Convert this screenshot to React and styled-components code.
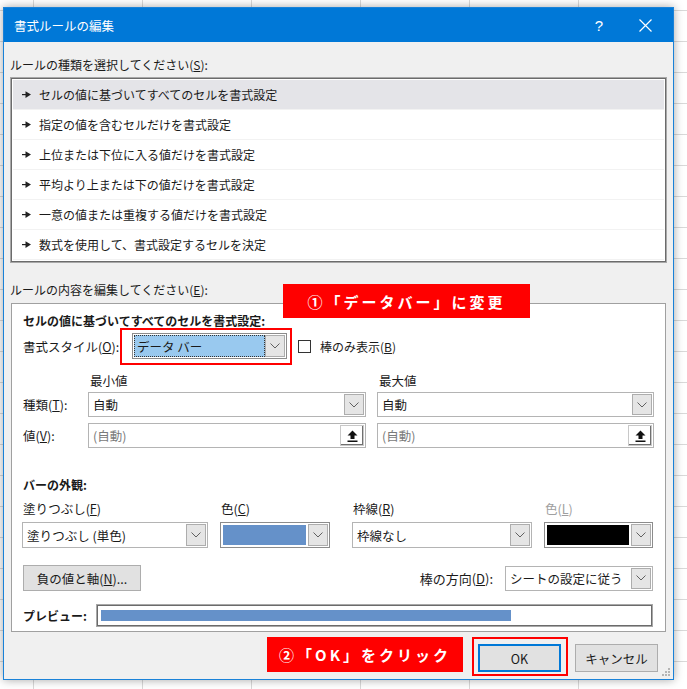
import React from "react";
import styled, { createGlobalStyle } from "styled-components";

const GlobalStyle = createGlobalStyle`
  html, body {
    margin: 0;
    padding: 0;
  }
  body {
    width: 687px;
    height: 689px;
    overflow: hidden;
    background-color: #fff;
    background-image:
      linear-gradient(to right, #d9d9d9 1px, transparent 1px),
      linear-gradient(to bottom, #d9d9d9 1px, transparent 1px);
    background-size: 109px 100%, 100% 31px;
    background-position: 33px 0, 0 10px;
    font-family: "Noto Sans CJK JP", "Noto Sans", sans-serif;
    color: #1a1a1a;
  }
`;

const Page = styled.div`
  padding: 7px 0 0 3px;
`;

const Dialog = styled.div`
  position: relative;
  box-sizing: border-box;
  width: 671px;
  height: 673px;
  border: 1px solid #1a82d8;
  background: #f0f0f0;
  box-shadow: 0 0 9px rgba(0, 0, 0, 0.35);
  display: flex;
  flex-direction: column;
`;

const TitleBar = styled.div`
  height: 34px;
  background: #0078d7;
  color: #fff;
  display: flex;
  align-items: center;
  padding: 0 5px 0 10px;
  font-size: 12.5px;
`;

const TitleText = styled.div`
  flex: 1;
`;

const TitleButton = styled.div`
  width: 46px;
  height: 34px;
  display: flex;
  align-items: center;
  justify-content: center;
  font-size: 15px;
  font-family: "Liberation Sans", sans-serif;
`;

const Body = styled.div`
  position: relative;
  flex: 1;
  display: flex;
  flex-direction: column;
  padding: 15px 6px 3px 6px;
  font-size: 12px;
`;

const SectionLabel = styled.div`
  height: 16px;
  line-height: 16px;
  margin: ${(p) => p.$m || "0"};
`;

const RuleList = styled.div`
  box-sizing: border-box;
  height: 186px;
  background: #fff;
  border: 1px solid #a8a8a8;
  box-shadow: inset 1px 1px 0 #6b6b6b, inset -1px -1px 0 #6b6b6b;
  padding: 2px;
  display: flex;
  flex-direction: column;
`;

const RuleRow = styled.div`
  height: 30px;
  flex: none;
  display: flex;
  align-items: center;
  padding-left: 9px;
  gap: 8px;
  background: ${(p) => (p.$active ? "#e4e4e8" : "#fff")};
  border-bottom: 1px solid #f2f2f2;
  box-sizing: border-box;
`;

const Panel = styled.div`
  box-sizing: border-box;
  height: 329px;
  margin: 0 1px;
  background: #fff;
  border: 1px solid #a0a0a0;
  padding: 9px 12px 3px 11px;
  display: flex;
  flex-direction: column;
`;

const Heading = styled.div`
  font-weight: 700;
  height: 15px;
  line-height: 15px;
  margin-top: ${(p) => p.$mt || 0}px;
`;

const Row = styled.div`
  display: flex;
  align-items: center;
  margin-top: ${(p) => p.$mt || 0}px;
  height: ${(p) => p.$h}px;
`;

const StyleLabel = styled.div`
  width: 97px;
  font-size: 12.5px;
`;

const Highlight = styled.div`
  box-sizing: border-box;
  height: 37px;
  width: 172px;
  border: 2px solid #ff0000;
  padding: 3px 3px 4px 10px;
  display: flex;
`;

const CheckBox = styled.div`
  box-sizing: border-box;
  width: 13px;
  height: 13px;
  border: 1px solid #333;
  background: #fff;
  margin: 0 9px 0 6px;
`;

const FieldGrid = styled.div`
  display: grid;
  grid-template-columns: 54px 278px 277px;
  column-gap: 11px;
  align-items: center;
  margin-top: ${(p) => p.$mt || 0}px;
  height: ${(p) => p.$h}px;
  font-size: 12.5px;
`;

const ColHead = styled.div`
  padding-left: 2px;
`;

const SelectBox = styled.div`
  box-sizing: border-box;
  width: ${(p) => (p.$w ? `${p.$w}px` : "100%")};
  height: ${(p) => p.$h || 25}px;
  border: 1px solid ${(p) => (p.$dark ? "#8c8c8c" : "#b4b4b4")};
  background: #fff;
  padding: 1px;
  display: flex;
`;

const SelectValue = styled.div`
  flex: 1;
  display: flex;
  align-items: center;
  padding-left: 3px;
  font-size: 12.5px;
  color: ${(p) => (p.$muted ? "#7a7a7a" : "#1a1a1a")};
  background: ${(p) => (p.$focus ? "#99c9ef" : "transparent")};
  outline: ${(p) => (p.$focus ? "1px dotted #333" : "none")};
  outline-offset: -1px;
`;

const Swatch = styled.div`
  flex: 1;
  margin: 1px 2px 1px 1px;
  background: ${(p) => p.$color};
`;

const DropButton = styled.div`
  box-sizing: border-box;
  width: 20px;
  border: 1px solid #adadad;
  background: #e5e5e5;
  display: flex;
  align-items: center;
  justify-content: center;
`;

const SpinButton = styled.div`
  box-sizing: border-box;
  width: 24px;
  background: #fff;
  border: 1px solid #c8c8c8;
  box-shadow: inset -1px -1px 0 #707070;
  display: flex;
  align-items: center;
  justify-content: center;
`;

const AppearanceRow = styled.div`
  display: flex;
  margin-left: -1px;
  margin-top: ${(p) => p.$mt || 0}px;
`;

const AppearanceCol = styled.div`
  display: flex;
  flex-direction: column;
  width: ${(p) => p.$w}px;
  margin-left: ${(p) => p.$ml || 0}px;
`;

const SmallLabel = styled.div`
  height: 16px;
  line-height: 16px;
  padding-left: 1px;
  margin-bottom: 5px;
  font-size: 12.5px;
  color: ${(p) => (p.$disabled ? "#a0a0a0" : "#1a1a1a")};
`;

const PushButton = styled.button`
  box-sizing: border-box;
  width: ${(p) => p.$w}px;
  height: ${(p) => p.$h || 26}px;
  background: #e1e1e1;
  border: 1px solid ${(p) => (p.$primary ? "#0078d7" : "#adadad")};
  box-shadow: ${(p) => (p.$primary ? "inset 0 0 0 1px #0078d7" : "none")};
  font-family: inherit;
  font-size: 12.5px;
  color: #1a1a1a;
  padding: 0;
  margin-top: ${(p) => p.$mt || 0}px;
  margin-left: ${(p) => p.$ml || 0}px;
`;

const RightGroup = styled.div`
  margin-left: auto;
  display: flex;
  align-items: center;
  gap: 12px;
  font-size: 13px;
`;

const PreviewBox = styled.div`
  box-sizing: border-box;
  width: 557px;
  height: 23px;
  margin-left: auto;
  background: #fff;
  border: 1px solid #a8a8a8;
  box-shadow: inset 1px 1px 0 #6b6b6b, inset -1px -1px 0 #6b6b6b;
  padding: 5px 4px;
`;

const PreviewBar = styled.div`
  height: 11px;
  background: #6591c9;
`;

const Footer = styled.div`
  display: flex;
  align-items: flex-start;
  margin-top: 5px;
  height: 39px;
  padding-left: 257px;
`;

const Note = styled.div`
  position: ${(p) => (p.$float ? "absolute" : "static")};
  left: ${(p) => (p.$float ? "279px" : "auto")};
  top: ${(p) => (p.$float ? "242px" : "auto")};
  box-sizing: border-box;
  width: ${(p) => p.$w}px;
  height: ${(p) => p.$h}px;
  background: #ff0000;
  color: #fff;
  font-weight: 700;
  font-size: 15px;
  letter-spacing: 3px;
  display: flex;
  align-items: center;
  justify-content: center;
`;

const OkFrame = styled.div`
  box-sizing: border-box;
  width: 96px;
  height: 39px;
  margin-left: 9px;
  border: 2px solid #ff0000;
  padding: 5px 0 0 4px;
`;

const Grip = styled.svg`
  position: absolute;
  right: 2px;
  bottom: 2px;
`;

const Chevron = () => (
  <svg width="10" height="6" viewBox="0 0 10 6">
    <polyline points="0.5,0.5 5,5 9.5,0.5" fill="none" stroke="#606060" strokeWidth="1" />
  </svg>
);

const UpArrow = () => (
  <svg width="11" height="12" viewBox="0 0 11 12">
    <polygon points="5.5,0.5 10.5,5.5 7.5,5.5 7.5,9 3.5,9 3.5,5.5 0.5,5.5" fill="#111" />
    <rect x="0.5" y="10.5" width="10" height="1.5" fill="#111" />
  </svg>
);

const RuleArrow = () => (
  <svg width="9" height="7" viewBox="0 0 9 7">
    <rect x="0" y="3" width="5" height="1.2" fill="#222" />
    <polygon points="3.5,0.3 9,3.6 3.5,6.9" fill="#222" />
  </svg>
);

const Select = ({ w, h, dark, focus, muted, color, children }) => (
  <SelectBox $w={w} $h={h} $dark={dark}>
    {color ? (
      <Swatch $color={color} />
    ) : (
      <SelectValue $focus={focus} $muted={muted}>
        {children}
      </SelectValue>
    )}
    <DropButton>
      <Chevron />
    </DropButton>
  </SelectBox>
);

const ValueInput = () => (
  <SelectBox>
    <SelectValue $muted>(自動)</SelectValue>
    <SpinButton>
      <UpArrow />
    </SpinButton>
  </SelectBox>
);

const rules = [
  "セルの値に基づいてすべてのセルを書式設定",
  "指定の値を含むセルだけを書式設定",
  "上位または下位に入る値だけを書式設定",
  "平均より上または下の値だけを書式設定",
  "一意の値または重複する値だけを書式設定",
  "数式を使用して、書式設定するセルを決定",
];

export default function App() {
  return (
    <>
      <GlobalStyle />
      <Page>
        <Dialog>
          <TitleBar>
            <TitleText>書式ルールの編集</TitleText>
            <TitleButton>?</TitleButton>
            <TitleButton>
              <svg width="13" height="13" viewBox="0 0 13 13">
                <path d="M0.5 0.5 L12.5 12.5 M12.5 0.5 L0.5 12.5" stroke="#fff" strokeWidth="1.2" />
              </svg>
            </TitleButton>
          </TitleBar>
          <Body>
            <SectionLabel $m="0 0 4px 0">
              ルールの種類を選択してください(<u>S</u>):
            </SectionLabel>
            <RuleList>
              {rules.map((r, i) => (
                <RuleRow key={r} $active={i === 0}>
                  <RuleArrow />
                  {r}
                </RuleRow>
              ))}
            </RuleList>
            <SectionLabel $m="19px 0 5px 0">
              ルールの内容を編集してください(<u>E</u>):
            </SectionLabel>
            <Note $float $w={247} $h={34}>
              ①「データバー」に変更
            </Note>
            <Panel>
              <Heading>セルの値に基づいてすべてのセルを書式設定:</Heading>
              <Row $h={37}>
                <StyleLabel>
                  書式スタイル(<u>O</u>):
                </StyleLabel>
                <Highlight>
                  <Select w={155} h={26} dark focus>
                    データ バー
                  </Select>
                </Highlight>
                <CheckBox />
                棒のみ表示(<u>B</u>)
              </Row>
              <FieldGrid $mt={6} $h={16}>
                <span />
                <ColHead>最小値</ColHead>
                <ColHead>最大値</ColHead>
              </FieldGrid>
              <FieldGrid $mt={5} $h={25}>
                <span>
                  種類(<u>T</u>):
                </span>
                <Select>自動</Select>
                <Select>自動</Select>
              </FieldGrid>
              <FieldGrid $mt={6} $h={25}>
                <span>
                  値(<u>V</u>):
                </span>
                <ValueInput />
                <ValueInput />
              </FieldGrid>
              <Heading $mt={29}>バーの外観:</Heading>
              <AppearanceRow $mt={9}>
                <AppearanceCol $w={186}>
                  <SmallLabel>
                    塗りつぶし(<u>F</u>)
                  </SmallLabel>
                  <Select h={26}>塗りつぶし (単色)</Select>
                </AppearanceCol>
                <AppearanceCol $w={110} $ml={12}>
                  <SmallLabel>
                    色(<u>C</u>)
                  </SmallLabel>
                  <Select h={26} dark color="#6591c9" />
                </AppearanceCol>
                <AppearanceCol $w={180} $ml={22}>
                  <SmallLabel>
                    枠線(<u>R</u>)
                  </SmallLabel>
                  <Select h={26}>枠線なし</Select>
                </AppearanceCol>
                <AppearanceCol $w={109} $ml={12}>
                  <SmallLabel $disabled>
                    色(<u>L</u>)
                  </SmallLabel>
                  <Select h={26} dark color="#000" />
                </AppearanceCol>
              </AppearanceRow>
              <Row $mt={17} $h={26}>
                <PushButton $w={118}>
                  負の値と軸(<u>N</u>)...
                </PushButton>
                <RightGroup>
                  <span>
                    棒の方向(<u>D</u>):
                  </span>
                  <Select w={148}>シートの設定に従う</Select>
                </RightGroup>
              </Row>
              <Row $mt={13} $h={23}>
                <Heading>プレビュー:</Heading>
                <PreviewBox>
                  <PreviewBar style={{ width: "75%" }} />
                </PreviewBox>
              </Row>
            </Panel>
            <Footer>
              <Note $w={196} $h={35}>
                ②「OK」をクリック
              </Note>
              <OkFrame>
                <PushButton $w={83} $h={28} $primary>
                  OK
                </PushButton>
              </OkFrame>
              <PushButton $w={83} $h={28} $mt={7} $ml={7}>
                キャンセル
              </PushButton>
            </Footer>
          </Body>
          <Grip width="10" height="10" viewBox="0 0 10 10">
            <g fill="#b5b5b5">
              <rect x="7" y="1" width="2" height="2" />
              <rect x="4" y="4" width="2" height="2" />
              <rect x="7" y="4" width="2" height="2" />
              <rect x="1" y="7" width="2" height="2" />
              <rect x="4" y="7" width="2" height="2" />
              <rect x="7" y="7" width="2" height="2" />
            </g>
          </Grip>
        </Dialog>
      </Page>
    </>
  );
}
